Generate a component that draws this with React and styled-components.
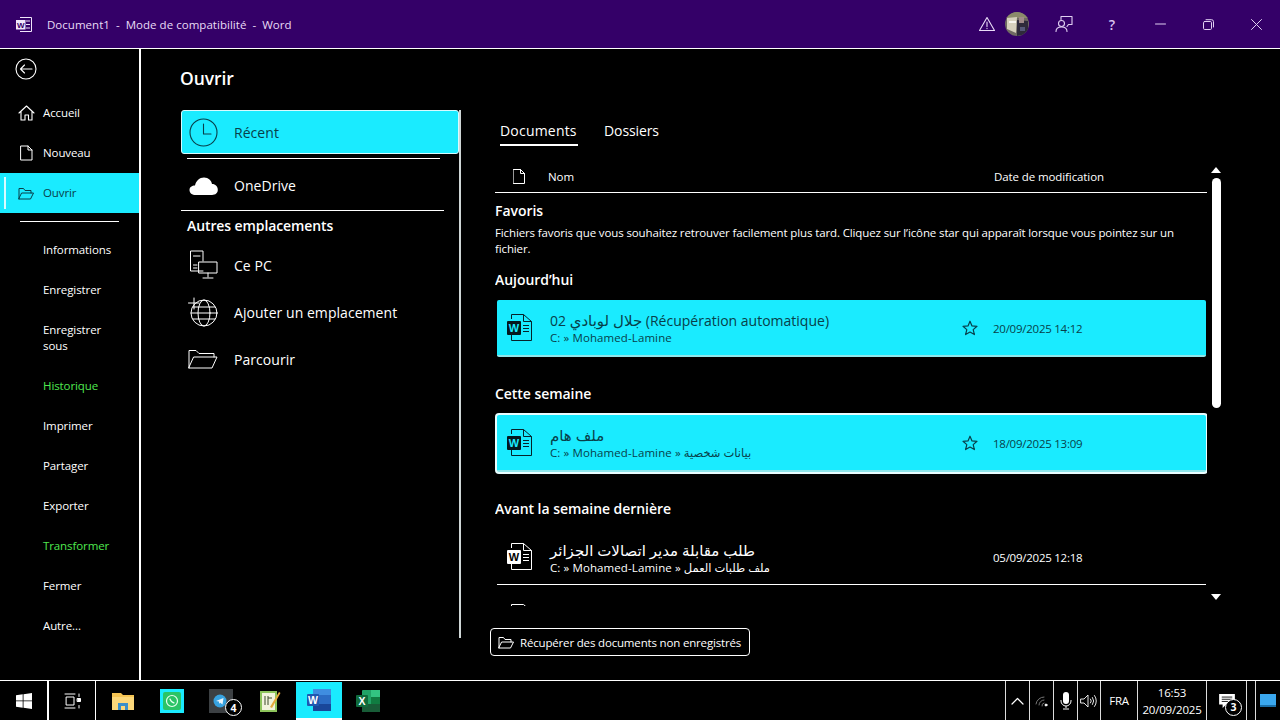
import React from "react";
import styled, { createGlobalStyle } from "styled-components";

const CYAN = "#1aebff";
const INK = "#083f4a";
const UI = `"Open Sans", "Noto Sans", "DejaVu Sans", sans-serif`;

const Global = createGlobalStyle`
  html, body { margin: 0; padding: 0; background: #000; height: 100%; }
  #root { width: 1280px; height: 720px; overflow: hidden; }
  * { box-sizing: border-box; }
  svg { display: block; }
`;

const Page = styled.div`
  width: 1280px; height: 720px; display: flex; flex-direction: column;
  background: #000; color: #fff; font-family: ${UI}; font-size: 12px;
`;

/* Title bar */
const TitleBar = styled.header`
  height: 49px; flex: none; display: flex; align-items: center; background: #340068;
  border-bottom: 1px solid #fff; color: #e8dcf6;
`;
const WordGlyph = styled.div`margin-left: 16px; margin-right: 15px;`;
const TitleText = styled.div`font-size: 11.5px; white-space: pre; letter-spacing: 0.03px;`;
const TitleTools = styled.div`margin-left: auto; display: flex; align-items: center;`;
const WarnSlot = styled.div`width: 18px; margin-right: 9px;`;
const AvatarSlot = styled.div`width: 24px; height: 24px; margin-right: 11px;`;
const TitleBtn = styled.div`
  width: 48px; height: 48px; display: flex; align-items: center; justify-content: center;
  font-size: 14px; font-weight: 600; color: #d9c5f0;
`;

/* Body */
const Body = styled.div`flex: 1; display: flex; min-height: 0;`;
const Sidebar = styled.nav`width: 141px; flex: none; border-right: 2px solid #fff; display: flex; flex-direction: column;`;
const BackBtn = styled.div`height: 41px; padding: 9px 0 0 15px; margin-bottom: 3px;`;
const NavItem = styled.div`
  position: relative; display: flex; align-items: center; gap: 8px; height: ${p => p.$h || 40}px;
  padding-left: ${p => (p.$icon ? 17 : 43)}px; line-height: 16px; font-size: 11.5px; letter-spacing: -0.1px;
  color: ${p => (p.$green ? "#4fe84f" : p.$active ? INK : "#fff")};
  background: ${p => (p.$active ? CYAN : "transparent")};
`;
const ActiveMark = styled.span`position: absolute; left: 4px; top: 4px; bottom: 4px; width: 2px; background: #d8fbff;`;
const NavIcon = styled.span`width: 18px; display: flex; justify-content: center; flex: none;`;
const NavRule = styled.div`height: 1px; background: #fff; margin: 8px 20px 8px 20px;`;

const Main = styled.main`flex: 1; padding-left: 39px; display: flex; flex-direction: column;`;
const Heading = styled.h1`
  margin: 0; height: 61px; flex: none; padding-top: 16px; line-height: 26px; font-size: 17.5px; font-weight: 600; letter-spacing: -0.1px;
`;
const Columns = styled.div`display: flex; flex: 1;`;

/* Left places */
const Places = styled.section`width: 281px; height: 528px; flex: none; border-right: 2px solid #cfd6d6; display: flex; flex-direction: column;`;
const Place = styled.div`
  display: flex; align-items: center; height: ${p => p.$h || 47}px; padding: 2px 0 0 8px; font-size: 14px; letter-spacing: 0.05px;
`;
const PlaceActive = styled(Place)`
  margin-left: 1px; height: 44px; padding: 0 0 0 6px; background: ${CYAN}; color: ${INK}; border: 1px solid #d8fbff; border-radius: 3px;
`;
const PlaceIcon = styled.span`width: 30px; margin-right: 16px; display: flex; justify-content: center; flex: none;`;
const PlaceRule = styled.div`height: 1px; background: #fff; margin: ${p => p.$m};`;
const PlaceTitle = styled.h2`margin: 0 0 3px 7px; height: 30px; line-height: 30px; font-size: 14px; font-weight: 600; letter-spacing: -0.1px;`;

/* Right files */
const Files = styled.section`flex: 1; padding-left: 34px; display: flex; flex-direction: column;`;
const Tabs = styled.div`height: 36px; flex: none; padding-left: 5px; display: flex; gap: 26px;`;
const Tab = styled.div`
  height: 36px; padding-top: 11px; line-height: 20px; font-size: 14px;
  letter-spacing: ${p => (p.$on ? "0.2px" : "-0.1px")};
  border-bottom: ${p => (p.$on ? "2px solid #fff" : "none")};
  font-weight: ${p => (p.$on ? 500 : 400)};
  width: ${p => (p.$on ? "78px" : "auto")}; white-space: nowrap;
`;
const ListArea = styled.div`height: 460px; flex: none; display: flex;`;
const Listing = styled.div`width: 712px; flex: none; padding-top: 15px;`;
const ListHead = styled.div`
  height: 32px; display: flex; align-items: center; padding-left: 18px; border-bottom: 1px solid #fff; font-size: 11.5px; letter-spacing: -0.1px;
`;
const HeadName = styled.span`margin-left: 23px;`;
const HeadDate = styled.span`margin-left: auto; width: 213px; white-space: nowrap;`;
const ListBody = styled.div`height: 413px; overflow: hidden; padding-top: 7px;`;
const Group = styled.h3`
  margin: ${p => p.$m || 0}px 0 0; height: 22px; line-height: 22px; font-size: 14px; font-weight: 600; letter-spacing: -0.05px; white-space: nowrap;
`;
const Hint = styled.p`margin: 3px 0 0; line-height: 16px; font-size: 11.5px; letter-spacing: -0.125px; width: 700px;`;
const Row = styled.div`
  display: flex; align-items: center; height: ${p => (p.$plain ? 55 : 57)}px; width: 709px; margin: ${p => p.$m || 0}px 0 0 2px; padding-left: 10px; flex: none;
  color: ${p => (p.$plain ? "#fff" : INK)};
  background: ${p => (p.$plain ? "transparent" : CYAN)};
  border-bottom: ${p => (p.$plain ? "1px solid #fff" : "2px solid #8fe6ea")};
  border-radius: ${p => (p.$plain ? 0 : 2)}px;
  box-shadow: ${p => (p.$sel ? "0 0 0 2px #e8fdff" : "none")};
`;
const RowIcon = styled.span`width: 26px; margin-right: 17px; flex: none;`;
const RowText = styled.div`flex: 1; min-width: 0; padding-top: 2px; display: flex; flex-direction: column;`;
const RowName = styled.div`font-size: 14px; line-height: 18px; white-space: nowrap;`;
const Arabic = styled.span`font-size: 15px;`;
const RowPath = styled.div`font-size: 11.5px; line-height: 16px; letter-spacing: 0.1px; white-space: nowrap;`;
const StarSlot = styled.span`width: 16px; margin-right: 15px; flex: none;`;
const RowDate = styled.div`width: 213px; flex: none; padding-top: 1px; font-size: 11.5px; letter-spacing: -0.25px;`;
const Scroll = styled.div`width: 18px; flex: none; display: flex; flex-direction: column; align-items: center; padding: 21px 0 6px;`;
const Thumb = styled.div`width: 9px; height: 230px; margin: 5px 0 auto; background: #fff; border-radius: 5px;`;
const Recover = styled.button`
  margin: 22px 0 0 -5px; width: 260px; height: 28px; flex: none; display: flex; align-items: center; gap: 6px; padding: 0 0 0 7px;
  background: #000; color: #fff; border: 1px solid #fff; border-radius: 4px; font: inherit; font-size: 11.5px; letter-spacing: -0.17px; white-space: nowrap;
`;

/* Taskbar */
const Taskbar = styled.footer`height: 40px; flex: none; display: flex; border-top: 1px solid #fff; background: #000;`;
const BarCell = styled.div`
  width: ${p => p.$w}px; flex: none; display: flex; align-items: center; justify-content: center; position: relative;
  border-right: ${p => `${p.$sep}px solid #fff`};
`;
const AppStrip = styled.div`display: flex; padding-left: 2px;`;
const AppCell = styled.div`
  width: 49px; flex: none; display: flex; align-items: center; justify-content: center; position: relative;
`;
const ActiveApp = styled.div`
  width: 46px; height: 38px; background: ${CYAN}; border-bottom: 2px solid #fff; display: flex; align-items: center; justify-content: center;
`;
const Badge = styled.span`
  position: absolute; width: 17px; height: 17px; right: ${p => p.$r}px; bottom: ${p => p.$b}px; border-radius: 50%; background: #000; border: 1px solid #fff;
  display: flex; align-items: center; justify-content: center; font-size: 10.5px; font-weight: 700; color: #fff;
`;
const Tray = styled.div`margin-left: auto; display: flex;`;
const TrayCell = styled.div`
  width: ${p => p.$w}px; flex: none; display: flex; align-items: center; justify-content: center; position: relative; flex-direction: column;
  border-left: 1px solid #dcdcdc; line-height: 17px; font-size: 11.5px; letter-spacing: -0.2px;
`;

/* Icons */
const Line = ({ w, h, vb, sw = 1, children, color = "currentColor" }) => (
  <svg width={w} height={h} viewBox={vb || `0 0 ${w} ${h}`} fill="none" stroke={color} strokeWidth={sw} strokeLinejoin="round" strokeLinecap="round">{children}</svg>
);
const Doc = ({ dark }) => {
  const st = dark ? "#06222a" : "#fff";
  return (
    <svg width="26" height="30" viewBox="0 0 26 30" fill="none">
      <path d="M4.500 6V1.500H16.500L24.500 8.500V27.500H4.500V22" stroke={st} strokeWidth="1" />
      <path d="M16.500 1.500V8.500H24.500" stroke={st} strokeWidth="1" />
      <path d="M16 12.500H22M16 15.500H22M16 18.500H22" stroke={st} strokeWidth="1" />
      <rect x="0" y="8" width="14" height="14" rx="1" fill={dark ? "#04181d" : "#fff"} />
      <text x="7" y="19" textAnchor="middle" fontSize="11" fontWeight="700" fontFamily="Liberation Sans" fill={dark ? CYAN : "#000"}>W</text>
    </svg>
  );
};
const DocTop = () => (
  <svg width="26" height="30" viewBox="0 0 26 30" fill="none">
    <path d="M4.500 6V1.500H16.500L24.500 8.500V27.500H4.500z" stroke="#fff" strokeWidth="1" />
  </svg>
);
const Star = () => (
  <Line w={16} h={16} sw={1.200}><path d="M8 1.200l2 4.700 5 .4-3.800 3.300 1.200 5L8 12l-4.400 2.600 1.200-5L1 6.300l5-.4z" /></Line>
);
const FolderOpen = ({ s = 16 }) => (
  <Line w={s} h={Math.round(s * 0.8)} vb="0 0 16 13" sw={1}><path d="M1 12V1.500h4.500L7 3.500h6V6M1 12h11.500L15.500 6H4z" /></Line>
);

export default function App() {
  return (
    <Page>
      <Global />
      <TitleBar>
        <WordGlyph>
          <svg width="16" height="17" viewBox="0 0 16 17" fill="none">
            <path d="M4 1.500H15.500V15.500H4" stroke="#f0e6fb" />
            <path d="M10 5H14M10 8.500H14M10 12H14" stroke="#f0e6fb" />
            <rect x="0" y="4" width="9.500" height="9.500" fill="#f0e6fb" />
            <text x="4.800" y="11.800" textAnchor="middle" fontSize="8" fontWeight="700" fontFamily="Liberation Sans" fill="#340068">W</text>
          </svg>
        </WordGlyph>
        <TitleText>Document1  -  Mode de compatibilité  -  Word</TitleText>
        <TitleTools>
          <WarnSlot>
            <Line w={18} h={16} color="#eadcf8" sw={1.100}>
              <path d="M9 1.500L16.500 14.500H1.500z" /><path d="M9 6V10.500M9 12.200V12.600" />
            </Line>
          </WarnSlot>
          <AvatarSlot>
            <svg width="24" height="24" viewBox="0 0 24 24">
              <defs>
                <clipPath id="av"><circle cx="12" cy="12" r="12" /></clipPath>
                <filter id="soft"><feGaussianBlur stdDeviation="0.600" /></filter>
              </defs>
              <g clipPath="url(#av)">
                <rect width="24" height="24" fill="#6f6a62" />
                <g filter="url(#soft)">
                  <rect x="0" y="0" width="24" height="6" fill="#8b8a6a" />
                  <path d="M2 6L12 5L11 21L2 17z" fill="#d6d0bc" />
                  <rect x="4" y="9" width="7" height="2" fill="#f7f5ee" />
                  <path d="M12 8L23 9V22L12 24z" fill="#2e2c3a" />
                  <rect x="14" y="5" width="5" height="6" fill="#a08a8a" />
                  <rect x="15" y="15" width="5" height="4" fill="#57587a" />
                </g>
              </g>
            </svg>
          </AvatarSlot>
          <TitleBtn>
            <Line w={18} h={18} color="#e0cff2" sw={1.100}>
              <path d="M6 4.500V1.500H17V9.500H13.500L12 11.500" /><circle cx="6.500" cy="8.500" r="3" /><path d="M1 16.500C1 13.500 3.500 12 6.500 12S12 13.500 12 16.500" />
            </Line>
          </TitleBtn>
          <TitleBtn>?</TitleBtn>
          <TitleBtn><Line w={11} h={2} color="#e0cff2"><path d="M0.500 1H10.500" /></Line></TitleBtn>
          <TitleBtn>
            <Line w={11} h={11} color="#e0cff2"><rect x="0.500" y="2.500" width="8" height="8" rx="1.200" /><path d="M3 0.700H8.500A2 2 0 0 1 10.500 2.700V8" /></Line>
          </TitleBtn>
          <TitleBtn><Line w={11} h={11} color="#e0cff2"><path d="M0.500 0.500L10.500 10.500M10.500 0.500L0.500 10.500" /></Line></TitleBtn>
        </TitleTools>
      </TitleBar>

      <Body>
        <Sidebar>
          <BackBtn>
            <Line w={22} h={22} sw={1.100}><circle cx="11" cy="11" r="10" /><path d="M17 11H5.500M9.500 7L5.500 11L9.500 15" /></Line>
          </BackBtn>
          <NavItem $icon>
            <NavIcon><Line w={17} h={16} sw={1.100}><path d="M1 8L8.500 1L16 8M3 6.500V15H7V10H10.500V15H14V6.500" /></Line></NavIcon>Accueil
          </NavItem>
          <NavItem $icon>
            <NavIcon><Line w={13} h={16}><path d="M1 1H8L12 5V15H1zM8 1V5H12" /></Line></NavIcon>Nouveau
          </NavItem>
          <NavItem $icon $active>
            <ActiveMark />
            <NavIcon><FolderOpen /></NavIcon>Ouvrir
          </NavItem>
          <NavRule />
          <NavItem>Informations</NavItem>
          <NavItem>Enregistrer</NavItem>
          <NavItem $h={56}>Enregistrer<br />sous</NavItem>
          <NavItem $green>Historique</NavItem>
          <NavItem>Imprimer</NavItem>
          <NavItem>Partager</NavItem>
          <NavItem>Exporter</NavItem>
          <NavItem $green>Transformer</NavItem>
          <NavItem>Fermer</NavItem>
          <NavItem>Autre...</NavItem>
        </Sidebar>

        <Main>
          <Heading>Ouvrir</Heading>
          <Columns>
            <Places>
              <PlaceActive>
                <PlaceIcon><Line w={29} h={29} sw={1.100}><circle cx="14.500" cy="14.500" r="13.500" /><path d="M14.500 6V16H22" /></Line></PlaceIcon>
                Récent
              </PlaceActive>
              <PlaceRule $m="4px 19px 0 7px" />
              <Place $h={51}>
                <PlaceIcon>
                  <svg width="29" height="20" viewBox="0 0 29 20"><path d="M7 19C3 19 .5 17 .5 14S3 9.500 6 9.500C7 5 10.500 1.500 15 1.500S22.500 4.500 23 8C26.500 8 28.800 10.500 28.800 13.800S26.500 19 23 19z" fill="#fff" /></svg>
                </PlaceIcon>
                OneDrive
              </Place>
              <PlaceRule $m="0 15px 0 1px" />
              <PlaceTitle>Autres emplacements</PlaceTitle>
              <Place $h={40}>
                <PlaceIcon>
                  <Line w={29} h={30}>
                    <path d="M14 21H1.500V1H14V11M4.500 6H11M4.500 18H8M4.500 15H8" /><rect x="10" y="12" width="18" height="11" /><path d="M19 23V27M14 28H24" />
                  </Line>
                </PlaceIcon>
                Ce PC
              </Place>
              <Place $h={54}>
                <PlaceIcon>
                  <Line w={30} h={30}>
                    <circle cx="16" cy="16" r="13" /><ellipse cx="16" cy="16" rx="6" ry="13" /><path d="M3 16H29M5 10H27M5 22H27M0.500 6H11M6 1V12" />
                  </Line>
                </PlaceIcon>
                Ajouter un emplacement
              </Place>
              <Place $h={40}>
                <PlaceIcon>
                  <Line w={30} h={20}><path d="M1 19V1.500H8L11 4.500H26V8M1 19H24L29 8H6z" /></Line>
                </PlaceIcon>
                Parcourir
              </Place>
            </Places>

            <Files>
              <Tabs>
                <Tab $on>Documents</Tab>
                <Tab>Dossiers</Tab>
              </Tabs>
              <ListArea>
                <Listing>
                  <ListHead>
                    <Line w={12} h={15}><path d="M.5 .5H7.500L11.500 4.500V14.500H.5zM7.500 .5V4.500H11.500" /></Line>
                    <HeadName>Nom</HeadName>
                    <HeadDate>Date de modification</HeadDate>
                  </ListHead>
                  <ListBody>
                    <Group>Favoris</Group>
                    <Hint>Fichiers favoris que vous souhaitez retrouver facilement plus tard. Cliquez sur l’icône star qui apparaît lorsque vous pointez sur un fichier.</Hint>
                    <Group $m={12}>Aujourd’hui</Group>
                    <Row $m={9}>
                      <RowIcon><Doc dark /></RowIcon>
                      <RowText>
                        <RowName>02 <Arabic>جلال لوبادي</Arabic> (Récupération automatique)</RowName>
                        <RowPath>C: » Mohamed-Lamine</RowPath>
                      </RowText>
                      <StarSlot><Star /></StarSlot>
                      <RowDate>20/09/2025 14:12</RowDate>
                    </Row>
                    <Group $m={26}>Cette semaine</Group>
                    <Row $m={10} $sel>
                      <RowIcon><Doc dark /></RowIcon>
                      <RowText>
                        <RowName><Arabic>ملف هام</Arabic></RowName>
                        <RowPath>C: » Mohamed-Lamine » بيانات شخصية</RowPath>
                      </RowText>
                      <StarSlot><Star /></StarSlot>
                      <RowDate>18/09/2025 13:09</RowDate>
                    </Row>
                    <Group $m={26}>Avant la semaine dernière</Group>
                    <Row $m={10} $plain>
                      <RowIcon><Doc /></RowIcon>
                      <RowText>
                        <RowName><Arabic>طلب مقابلة مدير اتصالات الجزائر</Arabic></RowName>
                        <RowPath>C: » Mohamed-Lamine » ملف طلبات العمل</RowPath>
                      </RowText>
                      <StarSlot />
                      <RowDate>05/09/2025 12:18</RowDate>
                    </Row>
                    <Row $m={6} $plain>
                      <RowIcon><DocTop /></RowIcon>
                    </Row>
                  </ListBody>
                </Listing>
                <Scroll>
                  <svg width="10" height="6" viewBox="0 0 10 6"><path d="M5 0L10 6H0z" fill="#fff" /></svg>
                  <Thumb />
                  <svg width="10" height="6" viewBox="0 0 10 6"><path d="M0 0H10L5 6z" fill="#fff" /></svg>
                </Scroll>
              </ListArea>
              <Recover><FolderOpen />Récupérer des documents non enregistrés</Recover>
            </Files>
          </Columns>
        </Main>
      </Body>

      <Taskbar>
        <BarCell $w={49} $sep={2}>
          <svg width="16" height="16" viewBox="0 0 16 16"><path d="M0 2.300L6.700 1.300V7.500H0zM7.500 1.200L16 0V7.500H7.500zM0 8.300H6.700V14.700L0 13.700zM7.500 8.300H16V16L7.500 14.800z" fill="#fff" /></svg>
        </BarCell>
        <BarCell $w={47} $sep={1}>
          <Line w={17} h={16} color="#fff"><path d="M1 1H11M1 15H11M2.500 4H10V12H2.500zM15 1V3.500M15 12.500V15" /><rect x="13.500" y="5.500" width="3" height="3" fill="#fff" /></Line>
        </BarCell>
        <AppStrip>
          <AppCell>
            <svg width="22" height="18" viewBox="0 0 22 18"><path d="M0 1H9L11 3H22V17H0z" fill="#f5c453" /><rect y="5" width="22" height="13" fill="#fcd87a" /><path d="M6 18V11H16V18H13V14H9V18z" fill="#3a8fc9" /></svg>
          </AppCell>
          <AppCell>
            <svg width="24" height="24" viewBox="0 0 24 24">
              <rect width="24" height="24" fill={CYAN} /><rect x="3" y="3" width="18" height="18" rx="2" fill="#2bc466" />
              <circle cx="12" cy="12" r="5.500" fill="none" stroke="#e8fff0" strokeWidth="1.200" />
              <path d="M9.800 9.600c.8 2.400 2.200 3.800 4.600 4.600" fill="none" stroke="#e8fff0" strokeWidth="1.300" />
            </svg>
          </AppCell>
          <AppCell>
            <svg width="24" height="24" viewBox="0 0 24 24">
              <rect width="24" height="24" fill="#3c4043" /><circle cx="11" cy="12" r="6.500" fill="#37a2e0" /><path d="M7 12l7.500-3-1 6.500-2.300-1.700-1 1-.3-2.300z" fill="#eaf6fd" />
            </svg>
            <Badge $r={3} $b={4}>4</Badge>
          </AppCell>
          <AppCell>
            <svg width="22" height="24" viewBox="0 0 22 24">
              <rect x="1" y="2" width="17" height="21" fill="#8dc45b" /><rect x="3" y="4" width="13" height="17" fill="#f1f3dc" />
              <path d="M6 7V16M9 7V16M9 9H13" stroke="#3c4a2a" strokeWidth="1" fill="none" />
              <path d="M11 18L20 3L21.500 4L13 19z" fill="#e5a93b" />
            </svg>
          </AppCell>
          <AppCell>
            <ActiveApp>
              <svg width="24" height="22" viewBox="0 0 24 22">
                <rect x="6" y="0" width="18" height="22" rx="1" fill="#2b6cc4" /><rect x="6" y="0" width="18" height="6" fill="#3f8de0" /><rect x="6" y="15" width="18" height="7" fill="#19479a" />
                <rect x="0" y="5" width="12" height="12" rx="1" fill="#1f58b0" />
                <text x="6" y="15" textAnchor="middle" fontSize="10.500" fontWeight="700" fontFamily="Liberation Sans" fill="#fff">W</text>
              </svg>
            </ActiveApp>
          </AppCell>
          <AppCell>
            <svg width="24" height="22" viewBox="0 0 24 22">
              <rect x="6" y="0" width="18" height="22" rx="1" fill="#21a366" /><rect x="15" y="0" width="9" height="7" fill="#33c481" /><rect x="6" y="14" width="18" height="8" fill="#185c37" /><rect x="15" y="7" width="9" height="7" fill="#107c41" />
              <rect x="0" y="5" width="12" height="12" rx="1" fill="#0f6b3c" />
              <text x="6" y="15" textAnchor="middle" fontSize="10.500" fontWeight="700" fontFamily="Liberation Sans" fill="#fff">X</text>
            </svg>
          </AppCell>
        </AppStrip>
        <Tray>
          <TrayCell $w={24}><Line w={13} h={8} color="#fff" sw={1.200}><path d="M1 7L6.500 1.500L12 7" /></Line></TrayCell>
          <TrayCell $w={24}>
            <Line w={14} h={13} color="#777" sw={1}><path d="M1 10A8 8 0 0 1 9 3M4 11A5 5 0 0 1 9 6M7 12A2.500 2.500 0 0 1 9 9" /><circle cx="11" cy="11" r="1" fill="#fff" stroke="#fff" /></Line>
          </TrayCell>
          <TrayCell $w={24}>
            <svg width="12" height="18" viewBox="0 0 12 18" fill="none"><rect x="3" y="0" width="6" height="12" rx="3" fill="#fff" /><path d="M1 8V9A5 5 0 0 0 11 9V8M6 14V16M3 17H9" stroke="#fff" /></svg>
          </TrayCell>
          <TrayCell $w={23}>
            <Line w={18} h={14} color="#fff" sw={0.900}><path d="M1 5H4L8 1V13L4 9H1zM10.500 5A3 3 0 0 1 10.500 9M12.500 3.500A6 6 0 0 1 12.500 10.500M14.500 1.500A9 9 0 0 1 14.500 12.500" /></Line>
          </TrayCell>
          <TrayCell $w={37}>FRA</TrayCell>
          <TrayCell $w={69}><span>16:53</span><span>20/09/2025</span></TrayCell>
          <TrayCell $w={40}>
            <svg width="18" height="14" viewBox="0 0 18 16"><path d="M0 0H18V12H8L4 16V12H0z" fill="#fff" /><path d="M3 3.500H15M3 6H15M3 8.500H11" stroke="#000" strokeWidth="1" /></svg>
            <Badge $r={4} $b={4}>3</Badge>
          </TrayCell>
          <TrayCell $w={9} />
          <TrayCell $w={25}>
            <svg width="16" height="13" viewBox="0 0 16 13"><rect width="16" height="11" fill="#3aa7ee" /><rect y="11" width="16" height="2" fill="#196ea8" /></svg>
          </TrayCell>
        </Tray>
      </Taskbar>
    </Page>
  );
}
